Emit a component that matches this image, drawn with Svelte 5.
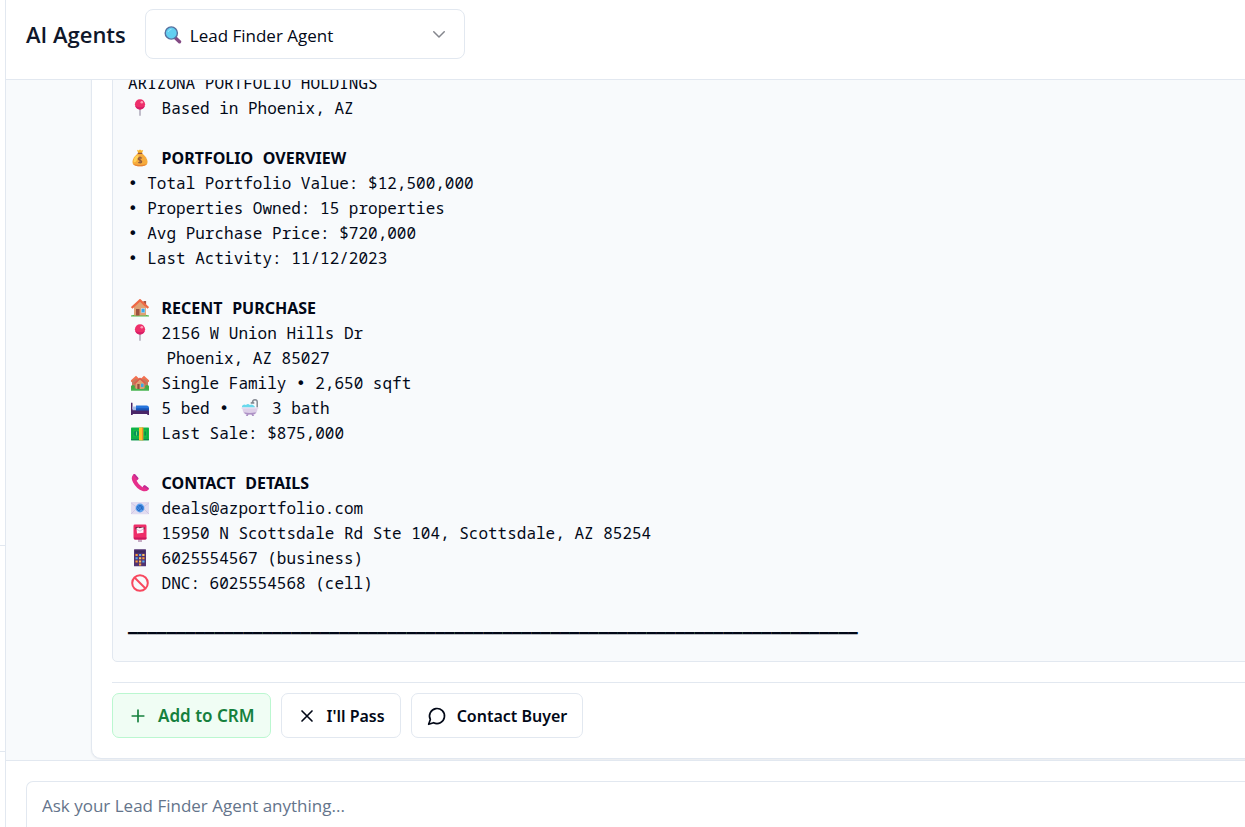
<script>
  const agents = ['Lead Finder Agent'];
  let agent = $state(agents[0]);
  let message = $state('');

  const dot = { bullet: '•' };
  const rows = [
    ['ARIZONA PORTFOLIO HOLDINGS'],
    [{ icon: 'pin' }, ' Based in Phoenix, AZ'],
    [],
    [{ icon: 'bag' }, ' ', { title: ['PORTFOLIO', 'OVERVIEW'] }],
    [dot, ' Total Portfolio Value: $12,500,000'],
    [dot, ' Properties Owned: 15 properties'],
    [dot, ' Avg Purchase Price: $720,000'],
    [dot, ' Last Activity: 11/12/2023'],
    [],
    [{ icon: 'house' }, ' ', { title: ['RECENT', 'PURCHASE'] }],
    [{ icon: 'pin' }, ' 2156 W Union Hills Dr'],
    ['    Phoenix, AZ 85027'],
    [{ icon: 'houses' }, ' Single Family ', dot, ' 2,650 sqft'],
    [{ icon: 'bed' }, ' 5 bed ', dot, ' ', { icon: 'bath' }, ' 3 bath'],
    [{ icon: 'cash' }, ' Last Sale: $875,000'],
    [],
    [{ icon: 'phone' }, ' ', { title: ['CONTACT', 'DETAILS'] }],
    [{ icon: 'mail' }, ' deals@azportfolio.com'],
    [{ icon: 'postbox' }, ' 15950 N Scottsdale Rd Ste 104, Scottsdale, AZ 85254'],
    [{ icon: 'keypad' }, ' 6025554567 (business)'],
    [{ icon: 'blocked' }, ' DNC: 6025554568 (cell)'],
    [],
    ['━'.repeat(76)]
  ];
</script>

{#snippet emoji(name)}
  <svg class="emoji" viewBox="0 0 18 18" aria-hidden="true">
    {#if name === 'pin'}
      <path d="M8.3 9h1.4v7.6q-.7.8-1.4 0z" fill="#a9a3b5" />
      <circle cx="9" cy="5.3" r="5.1" fill="#ee2f6b" />
      <path d="M4.2 7a5.1 5.1 0 0 0 9.6 0q-4 2.6-9.6 0z" fill="#d61f68" />
      <circle cx="10.8" cy="3.2" r="1.3" fill="#ff9fb7" />
    {:else if name === 'bag'}
      <path d="M6 .8l1.5.8L9 .4l1.5 1.2 1.7-.7-1.2 3.4H7.2z" fill="#f9b42a" />
      <path d="M7 4.500h4c3 1.800 5.500 5.400 5.500 8.500 0 2.900-2.300 4.300-7.500 4.300S1.500 15.900 1.500 13C1.500 9.900 4 6.300 7 4.500z" fill="#f6ab3c" />
      <path d="M5 7c-2 2-2.500 4-2.300 6 2 1.500 4-3 5-7z" fill="#ffd358" />
      <path d="M2.200 15q6.800 2.200 13.600 0-1.800 2.300-6.800 2.300T2.200 15z" fill="#e78335" />
      <rect x="6.600" y="3.800" width="4.800" height="1.300" rx=".6" fill="#96563e" />
      <path d="M10.900 9.200Q9 7.900 7.700 9t1.300 2.300q2.100.8 1.500 2t-3.300.2M9 7.600v7" fill="none" stroke="#8f5a3e" stroke-width="1.200" />
    {:else if name === 'house'}
      <path d="M0 16.500Q9 13.500 18 16.500v1H0z" fill="#55b94c" />
      <rect x="12.400" y="2" width="2.700" height="5" fill="#a95543" />
      <path d="M3 8l6-5.500L15 8v8.500H3z" fill="#dfa174" />
      <path d="M.7 9L9 1.300 17.300 9" fill="none" stroke="#ee6844" stroke-width="2.300" />
      <rect x="5" y="10" width="3.500" height="6.500" fill="#9b5140" />
      <rect x="10.200" y="9.600" width="3.700" height="4" fill="#37a9ec" stroke="#c7e8fb" stroke-width=".5" />
    {:else if name === 'houses'}
      <path d="M0 12q9-3 18 0v4.500H0z" fill="#4fb852" />
      <path d="M1 7l4-3.500L9 7v7H1zM9 7l4-3.500L17 7v7H9z" fill="#c37b5e" />
      <path d="M0 7.500l5-4.600 4 3.700M9 6.600l4-3.700 5 4.600" fill="none" stroke="#f27151" stroke-width="1.700" />
      <path d="M4.700 9L9 5l4.300 4v6.500H4.700z" fill="#dea174" />
      <path d="M3.400 9.600L9 4.500l5.600 5.100" fill="none" stroke="#dd5c4c" stroke-width="1.600" />
      <rect x="6.300" y="10" width="2.300" height="5.500" fill="#944d3f" />
      <rect x="10" y="9.700" width="2.500" height="3.300" fill="#38a8e9" />
      <path d="M0 14q9 2 18 0v2.500H0z" fill="#46b350" />
      <circle cx="2" cy="13" r="2" fill="#46a945" /><circle cx="16" cy="13" r="2" fill="#46a945" />
    {:else if name === 'bed'}
      <path d="M0 4q1-.8 1.500 0v6H18v6h-1.700v-2H1.700v2H0z" fill="#4a2365" />
      <path d="M1.500 7.500h5v4h-5z" fill="#a7bde9" />
      <path d="M5 6.500h10.500Q18 6.500 18 9v3H5z" fill="#2575dd" />
      <path d="M5 9.300h13V12H5z" fill="#1854b5" />
      <path d="M0 11.500h18v3.500H0z" fill="#4a2769" />
    {:else if name === 'bath'}
      <path d="M11.500 3.700Q11.500.8 14 .8t2.200 3V9" fill="none" stroke="#858a93" stroke-width="1.500" />
      <path d="M9.700 3.200h3.600v1.500H9.700z" fill="#777d87" />
      <path d="M1 7Q2.500 4.500 5 6q2-2 3.800 0 2.300-1.500 5 1.500V10H1z" fill="#69d9ed" />
      <path d="M.7 8.500h16.600v1.400h-.8q-.5 5.600-4.300 5.600H5.800q-3.800 0-4.300-5.600H.7z" fill="#ddcfe8" />
      <path d="M3 13.200q5.500 1.500 12 0-1 2.300-2.800 2.300l1 1.500h-2l-.7-1.500h-3L6.800 17h-2l1-1.500Q4 15.200 3 13.200z" fill="#ad91c5" />
      <path d="M.7 8.500h16.600v.8H.7z" fill="#f5f0fa" />
    {:else if name === 'cash'}
      <rect y="3.500" width="18" height="12.800" rx=".7" fill="#15bd43" />
      <path d="M0 15h18v1.300H0z" fill="#0a8950" />
      <rect x="1.300" y="5" width="15.400" height="9" fill="none" stroke="#0aa052" stroke-width=".8" />
      <circle cx="5.500" cy="9.500" r="2.800" fill="#08915a" />
      <path d="M5.500 7.500v4" stroke="#71e572" />
      <rect x="8" y="3.500" width="4.200" height="12.800" fill="#ffc22e" />
      <path d="M11 3.500h1.200v12.800H11z" fill="#f38c30" />
      <path d="M14.200 7.500v4" stroke="#078551" stroke-width="1.400" />
    {:else if name === 'phone'}
      <path d="M2.300.5q-3 3.300-.2 8 3.500 6.500 9.500 8.500 4 1 6-1.600.6-1-.3-1.700l-3-2.200q-.9-.6-1.600.2l-1.200 1.500Q7.300 10.600 5.600 6.800l1.500-1.500q.6-.7.1-1.500L4.500.7Q3.400-.4 2.300.5z" fill="#e62f8b" />
      <path d="M2.300.5l4.300 5.200q.9-.7.6-1.700L4.500.7Q3.400-.4 2.300.5zM11.700 12.600l5.800 2.900q.5-1-.3-1.700l-3-2.300q-.9-.6-1.600.2z" fill="#bd2d97" />
    {:else if name === 'mail'}
      <rect y="3" width="18" height="12.300" rx=".8" fill="#e2dcf0" />
      <path d="M0 3.800l9 7 9-7M0 15l6-6M18 15l-6-6" fill="none" stroke="#c9bfdf" stroke-width=".7" />
      <circle cx="9" cy="9" r="4.400" fill="#5ca1ee" />
      <path d="M10.700 7.200v2.600q0 1.200 1 .6 1-3.700-2.700-4-3 .2-3.100 2.900.3 2.500 3.200 2.600" fill="none" stroke="#1f63c0" stroke-width=".9" />
      <circle cx="9" cy="9" r="1.400" fill="none" stroke="#1f63c0" stroke-width=".9" />
    {:else if name === 'postbox'}
      <path d="M7 14h4v4H7z" fill="#c6abc4" />
      <rect x="2.500" y=".5" width="13" height="15" rx="1.400" fill="#ee2c68" />
      <path d="M3 13.500h12.500v1q0 1-1 1H4q-1 0-1-1z" fill="#c9185e" />
      <path d="M4.500 3.200h9v2.200h-9z" fill="#5b2238" />
      <path d="M5.500 4.300l1.800-.7 1.300.6 3.900-1v5.600l-6.500.6z" fill="#fff2fa" />
      <path d="M6 5.500l3 1.700 3.300-2.300" stroke="#bba9c8" fill="none" stroke-width=".7" />
    {:else if name === 'keypad'}
      <rect x="3" y=".3" width="12" height="17" rx=".5" fill="#523371" />
      <path d="M4 1.500h10v2.300H4z" fill="#3d285d" />
      <path d="M4.500 6h2.200M4.500 12.500h2.200M11.300 9.300h2.200M8 15.500h2.200" stroke="#ff9c39" stroke-width="2" />
      <path d="M8 6h2.200M4.500 9.300h2.200M11.300 12.500h2.200" stroke="#55a9f0" stroke-width="2" />
      <path d="M11.300 6h2.200M8 9.300h2.200M8 12.500h2.200" stroke="#ffc65a" stroke-width="2" />
    {:else if name === 'blocked'}
      <circle cx="9" cy="9" r="7.800" fill="none" stroke="#f8485f" stroke-width="2" />
      <path d="M3.500 3.500l11 11" stroke="#f8485f" stroke-width="2" />
    {:else if name === 'lens'}
      <path d="M11.500 12l4 3.800" stroke="#834a84" stroke-width="3.400" stroke-linecap="round" />
      <circle cx="7.300" cy="7" r="6.100" fill="#62cff1" stroke="#56709f" stroke-width="1.400" />
      <path d="M4 6Q5 3.500 7.500 3.300" fill="none" stroke="#9be6fa" />
    {/if}
  </svg>
{/snippet}

<div class="app">
  <aside><div></div><div></div><div></div></aside>
  <div class="page">
    <header>
      <h1>AI Agents</h1>
      <div class="picker">
        <select aria-label="Agent" bind:value={agent}>
          {#each agents as name}<option>{name}</option>{/each}
        </select>
        <span class="lead">{@render emoji('lens')}</span>
        <svg class="chevron" viewBox="0 0 24 24" aria-hidden="true"><path d="m5 9 7 7 7-7" /></svg>
      </div>
    </header>

    <main>
      <article>
        <div class="report">
          {#each rows as row}
            <div class="row">{#each row as part}{#if part.icon}{@render emoji(part.icon)}{:else if part.bullet}<span class="bullet">{part.bullet}</span>{:else if part.title}<strong>{part.title[0]}</strong>{' '}<strong>{part.title[1]}</strong>{:else}{part}{/if}{/each}</div>
          {/each}
        </div>
        <div class="actions">
          <button class="add">
            <svg viewBox="0 0 24 24" aria-hidden="true"><path d="M5 12h14M12 5v14" /></svg>Add to CRM
          </button>
          <button>
            <svg viewBox="0 0 24 24" aria-hidden="true"><path d="M18 6 6 18M6 6l12 12" /></svg>I'll Pass
          </button>
          <button>
            <svg viewBox="0 0 24 24" aria-hidden="true"><path d="M7.900 20A9 9 0 1 0 4 16.100L2 22Z" /></svg>Contact Buyer
          </button>
        </div>
      </article>
    </main>

    <footer>
      <input aria-label="Message" placeholder="Ask your Lead Finder Agent anything..." bind:value={message} />
    </footer>
  </div>
</div>

<style>
  :global(body) {
    margin: 0;
  }
  .app,
  .app * {
    box-sizing: border-box;
  }
  .app {
    display: flex;
    height: 100vh;
    overflow: hidden;
    background: #fff;
    color: #020817;
    font-family: 'Open Sans', 'Noto Sans', sans-serif;
    font-size: 17px;
  }
  aside {
    flex: 0 0 6px;
    display: grid;
    grid-template-rows: 1fr 206px 76px;
    border-right: 1px solid #e2e8f0;
  }
  aside div + div {
    border-top: 1px solid #e2e8f0;
  }
  .page {
    flex: 1;
    min-width: 0;
    display: flex;
    flex-direction: column;
  }
  header {
    display: flex;
    align-items: flex-start;
    gap: 19px;
    padding: 9px 20px 20px;
    border-bottom: 1px solid #e2e8f0;
  }
  h1 {
    margin: 0;
    color: #0f172a;
    font-size: 22px;
    line-height: 50px;
    font-weight: 600;
    white-space: nowrap;
  }
  .picker {
    display: grid;
    align-items: center;
    flex: 0 1 320px;
  }
  .picker > * {
    grid-area: 1 / 1;
  }
  select {
    appearance: none;
    width: 100%;
    height: 50px;
    padding: 2px 44px 0;
    border: 1px solid #e2e8f0;
    border-radius: 8px;
    background: #fff;
    color: inherit;
    font: inherit;
  }
  .lead {
    padding-left: 16px;
    line-height: 25px;
    pointer-events: none;
  }
  .chevron {
    justify-self: end;
    width: 18px;
    height: 18px;
    margin-right: 17px;
    fill: none;
    stroke: #84868d;
    stroke-width: 2;
    stroke-linecap: round;
    stroke-linejoin: round;
    pointer-events: none;
  }
  main {
    flex: 1;
    min-height: 0;
    display: flex;
    flex-direction: column;
    justify-content: flex-end;
    padding: 0 0 1px 85px;
    overflow: hidden;
    background: #f8fafc;
  }
  article {
    width: calc(100% + 40px);
    padding: 20px;
    border: 1px solid #e2e8f0;
    border-radius: 10px;
    background: #fff;
    box-shadow: 0 1px 2px rgb(15 23 42 / 6%);
  }
  .report {
    padding: 15px;
    border: 1px solid #e2e8f0;
    border-radius: 5px;
    background: #f8fafc;
    font-family: 'Noto Sans Mono', 'DejaVu Sans Mono', monospace;
    font-size: 16px;
    line-height: 25px;
  }
  .row {
    height: 25px;
    white-space: pre;
  }
  .bullet {
    font-family: 'DejaVu Sans Mono', monospace;
  }
  strong {
    font-family: 'Noto Sans', sans-serif;
    font-weight: 700;
  }
  .emoji {
    width: 18px;
    height: 18px;
    margin: 0 3px;
    vertical-align: -3px;
  }
  .actions {
    display: flex;
    gap: 10px;
    margin-top: 20px;
    padding-top: 10px;
    border-top: 1px solid #e2e8f0;
  }
  button {
    display: flex;
    align-items: center;
    gap: 10px;
    height: 45px;
    padding: 0 15px;
    border: 1px solid #e2e8f0;
    border-radius: 7px;
    background: #fff;
    color: inherit;
    font-family: 'Noto Sans', 'Open Sans', sans-serif;
    font-size: 16px;
    font-weight: 600;
    white-space: nowrap;
  }
  button svg {
    width: 20px;
    height: 20px;
    fill: none;
    stroke: currentColor;
    stroke-width: 2;
    stroke-linecap: round;
    stroke-linejoin: round;
  }
  .add {
    border-color: #bbf7d0;
    background: #f0fdf4;
    color: #15803d;
    font-size: 17px;
  }
  footer {
    padding: 20px 0 0 20px;
    border-top: 1px solid #e2e8f0;
  }
  input {
    display: block;
    width: 100%;
    height: 46px;
    padding: 2px 15px 0;
    border: 1px solid #e2e8f0;
    border-width: 1px 0 0 1px;
    border-radius: 7px 0 0 0;
    outline: none;
    background: #fff;
    color: inherit;
    font: inherit;
  }
  input::placeholder {
    color: #64748b;
    opacity: 1;
  }
</style>
